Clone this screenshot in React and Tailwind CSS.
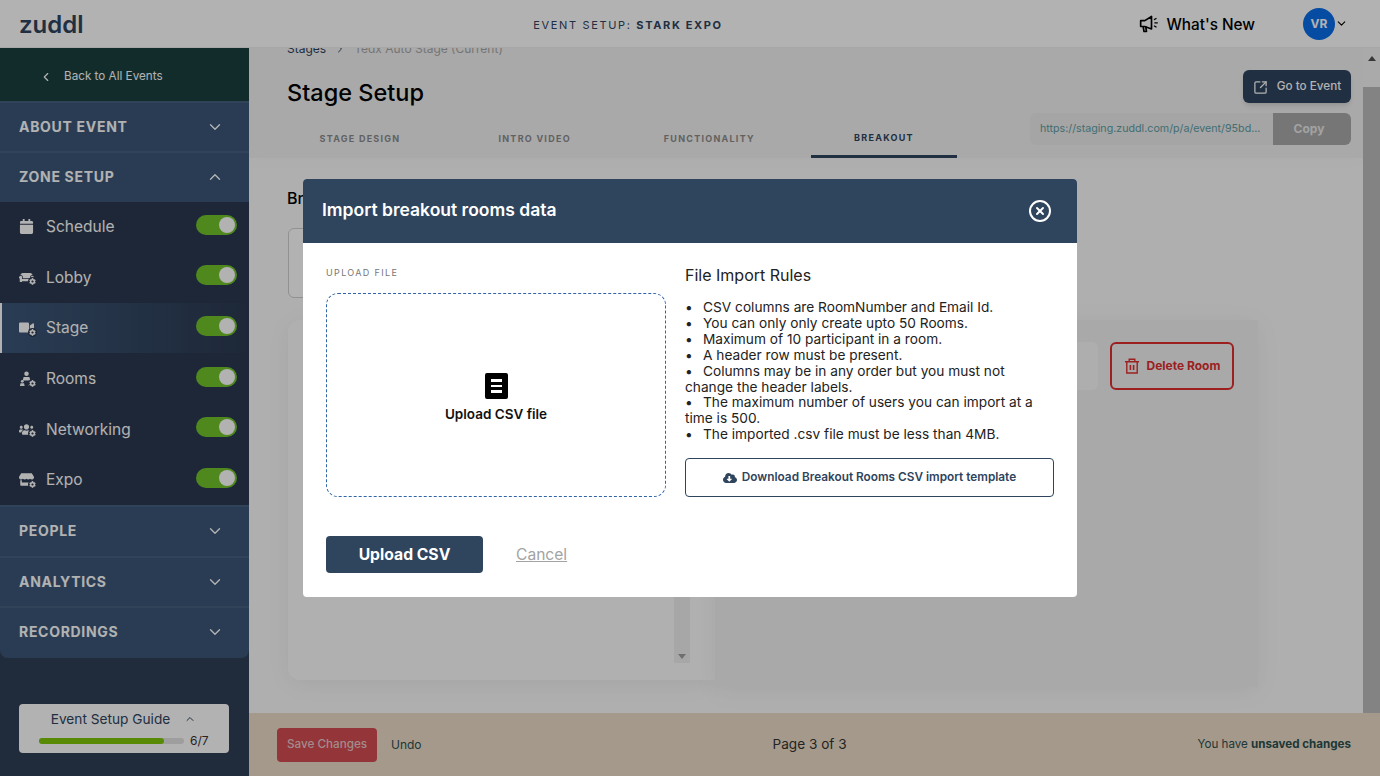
import { ChevronDown, ChevronLeft, ChevronRight, ChevronUp, CircleX, SquareArrowOutUpRight } from "lucide-react";
import { FaCalendar, FaCloudDownloadAlt, FaCog, FaCouch, FaStore, FaUsers, FaVideo } from "react-icons/fa";

function RoomsIcon({ className }) {
  return (
    <svg viewBox="0 0 16 16" className={className} fill="currentColor">
      <circle cx="8" cy="3" r="2.400" />
      <path d="M5 6.300h6l1.200 3.700H3.800z" />
      <circle cx="3.500" cy="11" r="1.500" />
      <path d="M1 16l.6-3h3.800l.6 3z" />
      <circle cx="12.500" cy="11" r="1.500" />
      <path d="M10 16l.6-3h3.800l.6 3z" />
    </svg>
  );
}

const ZONES = [
  { label: "Schedule", Icon: FaCalendar },
  { label: "Lobby", Icon: FaCouch, gear: true },
  { label: "Stage", Icon: FaVideo, gear: true, active: true },
  { label: "Rooms", Icon: RoomsIcon, gear: true },
  { label: "Networking", Icon: FaUsers, gear: true },
  { label: "Expo", Icon: FaStore, gear: true },
];

const TABS = ["STAGE DESIGN", "INTRO VIDEO", "FUNCTIONALITY", "BREAKOUT"];

const RULES = [
  "CSV columns are RoomNumber and Email Id.",
  "You can only only create upto 50 Rooms.",
  "Maximum of 10 participant in a room.",
  "A header row must be present.",
  "Columns may be in any order but you must not change the header labels.",
  "The maximum number of users you can import at a time is 500.",
  "The imported .csv file must be less than 4MB.",
];

function SectionRow({ label, open, last }) {
  const Chevron = open ? ChevronUp : ChevronDown;
  return (
    <div className={`flex items-center justify-between border-t-2 border-[#45607f] bg-[#3c5779] pl-[19px] pr-[25px] ${last ? "h-[52px] rounded-b-lg pb-[1.500px]" : "h-[50.500px]"}`}>
      <span className="text-sm font-bold tracking-[0.05em] text-white">{label}</span>
      <Chevron className="h-[18px] w-[18px] text-white" strokeWidth={1.800} />
    </div>
  );
}

function ZoneRow({ label, Icon, gear, active }) {
  return (
    <div className={`flex h-[50.600px] items-center justify-between pr-[12px] ${active ? "border-l-2 border-white bg-gradient-to-r from-[#3c5779] to-transparent pl-[17px]" : "pl-[19px]"}`}>
      <div className="flex items-center">
        <span className="relative flex h-4 w-[27px] items-center">
          <Icon className="h-[15px] w-[15px] text-white" />
          {gear ? <FaCog className="absolute left-[9px] top-[8px] h-[9px] w-[9px] rounded-full bg-[#2b3950] p-px text-white" /> : null}
        </span>
        <span className="text-[15.500px] text-white">{label}</span>
      </div>
      <span className="mb-1 flex h-5 w-[41px] items-center justify-end rounded-full bg-[#71c52c] pr-0.5">
        <span className="h-4 w-4 rounded-full bg-white" />
      </span>
    </div>
  );
}

function Sidebar() {
  return (
    <aside className="flex w-[249px] shrink-0 flex-col bg-[#2f3e57]">
      <div className="flex h-[52.500px] shrink-0 items-center bg-[#1b3f3f] pl-[39px] pt-[5px]">
        <ChevronLeft className="h-[14px] w-[14px] text-white" />
        <span className="ml-[11px] text-[11.700px] text-white">Back to All Events</span>
      </div>
      <SectionRow label="ABOUT EVENT" />
      <SectionRow label="ZONE SETUP" open />
      <div className="bg-[#2b3950]">
        {ZONES.map((zone) => (
          <ZoneRow key={zone.label} {...zone} />
        ))}
      </div>
      <SectionRow label="PEOPLE" />
      <SectionRow label="ANALYTICS" />
      <SectionRow label="RECORDINGS" last />
      <div className="mt-auto mb-[23px] ml-[19px] h-[49px] w-[210px] rounded-[4px] bg-white px-5 pt-[5px]">
        <div className="flex items-center justify-center gap-[14px] pr-px text-[13.700px] text-[#2f445d]">
          <span>Event Setup Guide</span>
          <ChevronUp className="h-3 w-3" />
        </div>
        <div className="mt-[3px] flex items-center gap-[6px]">
          <div className="h-[6px] w-[145px] rounded-sm bg-[#e2e2e2]">
            <div className="h-full w-[125px] rounded-sm bg-[#7fc60a]" />
          </div>
          <span className="text-xs text-[#333333]">6/7</span>
        </div>
      </div>
    </aside>
  );
}

function PageContent() {
  return (
    <div className="min-w-0 flex-1 overflow-hidden">
      <div className="-mt-[7px] flex justify-between bg-[#f3f3f3] pl-[38px] pr-3 shadow-[0_4px_12px_rgba(0,0,0,0.02)]">
        <div>
          <div className="flex items-center text-xs">
            <span className="text-[#2f445d]">Stages</span>
            <ChevronRight className="mx-2 h-3 w-3 text-[#2f445d]" />
            <span className="text-[#a8a8a8]">Tedx Auto Stage (Current)</span>
          </div>
          <h1 className="mt-[18px] text-[23.500px] font-medium text-black">Stage Setup</h1>
          <div className="mt-[13px] flex gap-[28.670px]">
            {TABS.map((tab) => (
              <div
                key={tab}
                className={`flex h-[35px] w-[146px] items-center justify-center pb-[4px] text-[9px] font-bold tracking-[0.14em] ${tab === "BREAKOUT" ? "border-b-[3px] border-[#2f445d] text-[#2f445d]" : "text-[#8c8c8c]"}`}
              >
                {tab}
              </div>
            ))}
          </div>
        </div>
        <div className="flex flex-col items-end pt-[29px]">
          <button className="flex h-[33px] w-[108px] items-center justify-center gap-[9px] rounded-md bg-[#2f445d] pt-px text-[11.700px] font-medium text-white shadow-md">
            <SquareArrowOutUpRight className="h-[15px] w-[15px]" />
            Go to Event
          </button>
          <div className="mt-[10px] flex h-[32px] w-[321px] overflow-hidden rounded-md bg-[#ececec]">
            <span className="flex-1 truncate pl-[10px] text-[10.700px] leading-[32px] text-[#5f9ea5]">https://staging.zuddl.com/p/a/event/95bd...</span>
            <span className="flex w-[78px] items-center justify-center bg-[#aaaaaa] pr-[6px] text-xs font-bold text-[#e8e8e8]">Copy</span>
          </div>
        </div>
      </div>

      <div className="pl-[39px]">
        <h2 className="mt-[28px] -ml-px text-base font-medium text-black">Breakout Rooms</h2>
        <div className="mt-[18px] h-[70px] w-[300px] rounded-md border border-[#d0d0d0] bg-white" />

        <div className="mt-[22px] flex w-[970px]">
          <div className="flex h-[360px] w-[427px] justify-end rounded-l-xl bg-[#fdfdfd] pr-[25px] shadow-[0_4px_24px_rgba(0,0,0,0.06)]">
            <div className="flex h-[343px] w-4 items-end justify-center bg-[#f0f0f0] pb-1">
              <span className="h-0 w-0 border-x-[4px] border-t-[5px] border-x-transparent border-t-[#a0a0a0]" />
            </div>
          </div>
          <div className="flex h-[367px] flex-1 items-start justify-end gap-3 bg-[#f2f2f2] pr-6 pt-[22px] shadow-[0_4px_24px_rgba(0,0,0,0.06)]">
            <div className="h-[48px] w-[200px] rounded-md bg-[#fafafa]" />
            <button className="flex h-[48px] w-[124px] items-center justify-center gap-[7px] rounded-md border-2 border-[#e02f2f] text-xs font-bold text-[#e02f2f]">
              <svg viewBox="0 0 16 16" className="h-4 w-4" fill="none" stroke="currentColor" strokeWidth="1.400">
                <path d="M1 3.800h14M5.200 3.800V1.200h5.600v2.600M2.800 3.800V15h10.400V3.800" />
                <path d="M6.400 7v5M9.600 7v5" strokeWidth="1.600" />
              </svg>
              Delete Room
            </button>
          </div>
        </div>
      </div>
    </div>
  );
}

function ImportModal() {
  return (
    <div className="fixed inset-0 z-10 flex items-center justify-center bg-black/30">
      <div className="h-[418px] w-[774px] overflow-hidden rounded-[4px] bg-white">
        <div className="flex h-16 items-center justify-between bg-[#2f445d] pl-[19px] pr-[25px]">
          <span className="mb-0.5 text-[17.500px] font-semibold text-white">Import breakout rooms data</span>
          <CircleX className="h-6 w-6 text-white" strokeWidth={2} />
        </div>
        <div className="flex gap-[19px] pl-[23px] pr-[23px]">
          <div className="w-[340px] pt-[23px]">
            <div className="text-[9px] leading-[13px] tracking-[0.15em] text-[#777777]">UPLOAD FILE</div>
            <div className="mt-[14px] flex h-[204px] flex-col items-center justify-center rounded-xl border border-dashed border-[#2f64a8] pt-[7px]">
              <span className="flex h-[26px] w-[23px] flex-col items-center justify-center gap-[3px] rounded-[2px] bg-black">
                <span className="h-[2.500px] w-[11px] bg-white" />
                <span className="h-[2.500px] w-[11px] bg-white" />
                <span className="h-[2.500px] w-[11px] bg-white" />
              </span>
              <span className="mt-[5px] text-[13.500px] font-semibold text-[#111111]">Upload CSV file</span>
            </div>
          </div>
          <div className="w-[369px] pt-[22px]">
            <div className="text-base leading-5 text-[#222222]">File Import Rules</div>
            <div className="mt-[15px] text-[13.700px] leading-[15.900px] text-[#222222]">
              {RULES.map((rule) => (
                <div key={rule}>
                  <span className="inline-block w-[18px]">•</span>
                  {rule}
                </div>
              ))}
            </div>
            <button className="mt-[15px] flex h-[39px] w-full items-center justify-center gap-[5px] rounded-[4px] border border-[#2f445d] pt-px text-[11.800px] font-semibold text-[#2f445d]">
              <FaCloudDownloadAlt className="h-[14px] w-[14px]" />
              Download Breakout Rooms CSV import template
            </button>
          </div>
        </div>
        <div className="mt-[39px] flex items-center pl-[23px]">
          <button className="h-[37px] w-[157px] rounded-[4px] bg-[#2f445d] pt-px text-[15.700px] font-bold text-white">Upload CSV</button>
          <span className="ml-[33px] pt-px text-[15.600px] text-[#a3a3a3] underline">Cancel</span>
        </div>
      </div>
    </div>
  );
}

export default function App() {
  return (
    <div className="flex h-[776px] w-[1380px] flex-col overflow-hidden bg-[#fbfbfb] font-['Inter',sans-serif]">
      <header className="flex h-12 shrink-0 items-center justify-between border-b border-[#f0f0f0] bg-white pl-[19px] pr-[32px] pt-[3px]">
        <span className="w-[189px] text-[24px] font-semibold leading-none text-[#2f445d]">zuddl</span>
        <div className="text-[11px] tracking-[0.15em] text-[#2f445d]">
          EVENT SETUP: <span className="font-bold">STARK EXPO</span>
        </div>
        <div className="-mt-[3px] flex w-[300px] items-center justify-end">
          <svg viewBox="0 0 24 24" className="h-5 w-5 text-black" fill="none" stroke="currentColor" strokeWidth="2" strokeLinejoin="round">
            <path d="M2 8h5l8-5v15l-8-3H2zM5 15l1 6h3l-1-6" />
            <path d="M18 7l3-2M18.500 10.500h4M18 14l3 2" strokeWidth="1.500" />
          </svg>
          <span className="ml-[8px] pt-[3px] text-[15.300px] font-medium text-black">What's New</span>
          <span className="ml-[48px] flex h-8 w-8 items-center justify-center rounded-full bg-[#0a6ee8] text-xs font-bold text-white">VR</span>
          <ChevronDown className="h-[13px] w-[13px] text-black" strokeWidth={2} />
        </div>
      </header>
      <div className="flex min-h-0 flex-1">
        <Sidebar />
        <main className="flex min-w-0 flex-1 flex-col">
          <div className="flex min-h-0 flex-1">
            <PageContent />
            <div className="flex w-[17px] shrink-0 flex-col bg-[#f4f4f4]">
              <div className="flex h-[39px] items-start justify-center pt-[8px]">
                <span className="h-0 w-0 border-x-[4px] border-b-[5px] border-x-transparent border-b-[#505050]" />
              </div>
              <div className="flex-1 bg-[#bcbcbc]" />
            </div>
          </div>
          <footer className="flex h-[63px] shrink-0 items-center justify-between bg-[#ecdcc8] pl-7 pr-[29px]">
            <div className="flex items-center gap-[14px]">
              <button className="h-[34px] w-[100px] rounded-[4px] bg-[#d44c53] pt-px text-[11.700px] font-medium text-[#e8c8c8]">Save Changes</button>
              <span className="text-xs text-[#2b4f4f]">Undo</span>
            </div>
            <span className="text-[13.600px] text-[#333333]">Page 3 of 3</span>
            <span className="text-[11.600px] text-[#2b4f4f]">
              You have <span className="font-bold">unsaved changes</span>
            </span>
          </footer>
        </main>
      </div>
      <ImportModal />
    </div>
  );
}
